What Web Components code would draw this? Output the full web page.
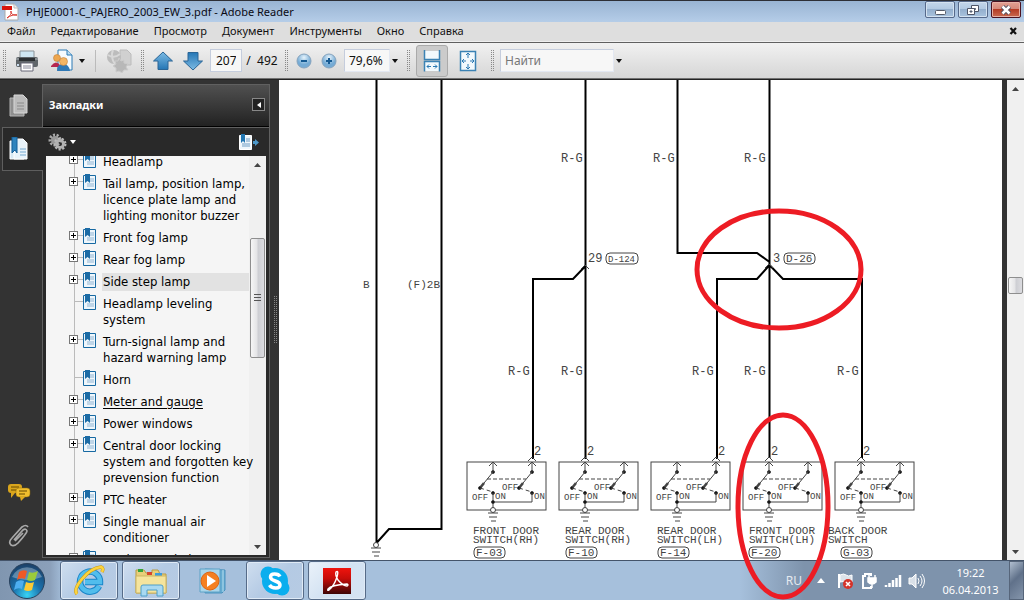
<!DOCTYPE html>
<html lang="ru">
<head>
<meta charset="utf-8">
<title>PHJE0001-C_PAJERO_2003_EW_3.pdf - Adobe Reader</title>
<style>
html,body{margin:0;height:100%;overflow:hidden}
body{font:12px/16px "Noto Sans","Open Sans",sans-serif;color:#111;background:#333}
</style>
</head>
<body>
<reader-app></reader-app>
<script>
const BASE = `*{box-sizing:border-box}
button{font:inherit;color:inherit;margin:0;padding:0;border:0;background:none;display:flex;align-items:center;justify-content:center}
input{font:inherit;color:inherit;margin:0;min-width:0;outline:0}
svg{display:block;flex:none}`;
function define(name, css, html) {
  customElements.define(name, class extends HTMLElement {
    constructor() {
      super();
      this.attachShadow({mode: 'open'}).innerHTML =
        `<style>${BASE}${css}</style>${typeof html === 'function' ? html(this) : html}`;
    }
  });
}

/* ---------- window frame ---------- */
define('title-bar', `
:host{display:flex;align-items:center;height:22px;padding-left:2px;border-top:1px solid #2d2f36;background:linear-gradient(#99b4d3,#b5cde8)}
h1{flex:1;margin:0 0 0 7px;font-size:11px;line-height:16px;font-weight:normal;color:#0a0a14;white-space:nowrap}
.b{display:flex;gap:3px;margin-right:3px;align-self:flex-start}
button{width:30px;height:17px;border:1px solid #56698a;border-radius:2px;background:linear-gradient(#c3d6ea,#b3cae2 45%,#94afcd 50%,#a9c3de);box-shadow:inset 0 0 0 1px #d4e2f0}
button.x{border-color:#4a1220;background:linear-gradient(#e3a193,#d5897a 45%,#b53c25 50%,#c96a50);box-shadow:inset 0 0 0 1px #e6b1a6}
`, `
<svg width="17" height="18" viewBox="0 0 17 18"><path d="M3 1h9l4 4v12H3z" fill="#fff" stroke="#aaa"/><path d="M12 1v4h4" fill="#eee" stroke="#bbb"/><path d="M0 3h10v4H0z" fill="#d8150c"/><path d="M5 15c3-2 5-5 4-7-1 1 1 5 6 4-3-1-7 1-10 3z" fill="none" stroke="#d8352c"/></svg>
<h1>PHJE0001-C_PAJERO_2003_EW_3.pdf - Adobe Reader</h1>
<div class="b">
<button aria-label="Свернуть"><svg width="14" height="12"><rect x="2.5" y="6.5" width="10" height="4" rx="1" fill="#fff" stroke="#555b68"/></svg></button>
<button aria-label="Восстановить"><svg width="14" height="12"><path d="M5.500 1.500h7v6h-7z" fill="#fff" stroke="#4f5668"/><path d="M8.500 4.500h1v1h-1zM1.500 4.500h7v6h-7z" fill="#fff" stroke="#4f5668"/><path d="M4 7h2v1H4z" fill="#98b1ce" stroke="#4f5668"/></svg></button>
<button class="x" aria-label="Закрыть"><svg width="14" height="12"><path d="M3.500 2.500l7 7M10.500 2.500l-7 7" stroke="#4b5060" stroke-width="4.500"/><path d="M3.500 2.500l7 7M10.500 2.500l-7 7" stroke="#fff" stroke-width="2.500"/></svg></button>
</div>`);

define('menu-bar', `
:host{display:flex;align-items:center;height:20px;padding:0 6px 2px 7px;background:#dedede;border-bottom:1px solid #efefef}
nav{display:flex;flex:1;gap:15px;font-size:11px}
nav button{white-space:nowrap}
`, `<nav>${['Файл','Редактирование','Просмотр','Документ','Инструменты','Окно','Справка'].map(t=>`<button>${t}</button>`).join('')}</nav>
<button aria-label="Закрыть документ"><svg width="9" height="8"><path d="M1.500 1l5.500 6M7 1L1.500 7" stroke="#111" stroke-width="2.200"/></svg></button>`);

const caret = (c = '#111') => `<svg width="6" height="4"><path d="M0 0h6L3 4z" fill="${c}"/></svg>`;
define('tool-grip', `:host{display:block;flex:none;width:8px;height:22px;padding:0 2px}
i{display:block;height:22px;background:conic-gradient(#888 25%,transparent 0) 0 0/2px 2px}`, `<i></i>`);
define('combo-box', `:host{display:flex;align-items:center;flex:none}
input{height:23px;border:1px solid #c5cddd;border-bottom-color:#e3e8f2;border-right-color:#e3e8f2;background:#f7f7f7;padding:0 4px}
input::placeholder{color:#777;opacity:1}
button{width:10px;height:22px}`,
el => `<input aria-label="${el.getAttribute('label')}" style="width:${el.getAttribute('size')}px" value="${el.getAttribute('value')||''}" placeholder="${el.getAttribute('hint')||''}"><button aria-label="Список">${caret()}</button>`);

const arrow = `<svg width="22" height="22" viewBox="0 0 22 22"><defs><linearGradient id="a" x2="0" y2="1"><stop stop-color="#7dbbe4"/><stop offset="1" stop-color="#2476b5"/></linearGradient></defs><path d="M11 2l9.500 9H16v8.500H6V11H1.500z" fill="url(#a)" stroke="#2a6596"/></svg>`;
const round = p => `<svg width="18" height="18"><defs><radialGradient id="r" cy=".25"><stop stop-color="#e6f3fb"/><stop offset="1" stop-color="#75abd5"/></radialGradient></defs><circle cx="9" cy="9" r="7" fill="url(#r)" stroke="#86a3bd"/><path d="${p}" stroke="#155a93" stroke-width="2"/></svg>`;
define('tool-bar', `
:host{display:flex;align-items:center;gap:4px;height:37px;border-top:1px solid #606060;border-bottom:1px solid #707070;background:linear-gradient(#f1f1f1,#d6d6d6);overflow:hidden}
button{height:30px;width:30px;flex:none}
.w{width:42px;gap:5px}.n{width:26px}.r{width:20px}.p{width:22px}
.on{height:32px;border:1px solid #aaa;border-radius:3px;background:#cbcbcb}
.m{width:32px}
.down svg{transform:rotate(180deg)}
hr{width:1px;height:22px;margin:0 4px 0 3px;border:0;background:#bbb}
.page{width:32px;height:23px;border:1px solid #c5cddd;background:#f7f7f7;padding:0 5px}
output{width:32px;text-align:center;white-space:pre}
`, `
<tool-grip></tool-grip>
<button aria-label="Печать"><svg width="24" height="24" viewBox="0 0 24 24"><path d="M5 2h14v7H5z" fill="#cfe6f2" stroke="#8c9499"/><rect x="1" y="8" width="22" height="10" rx="2" fill="#60666a"/><path d="M1 9h22v2H1z" fill="#8b9195"/><path d="M4 9h16v3H4z" fill="#2c3033"/><path d="M6 14h12v8H6z" fill="#fff" stroke="#667"/><path d="M8 17h8M8 19h8" stroke="#889"/><path d="M2 15h2v2H2z" fill="#cde"/></svg></button>
<button class="w" aria-label="Совместная работа"><svg width="24" height="24" viewBox="0 0 24 24"><path d="M8 1h9l5 5v15H8z" fill="#f5fbff" stroke="#2d7ab5"/><path d="M17 1v5h5" fill="#bcdcf0" stroke="#2d7ab5"/><path d="M1 17q5-7 10 0v1H1z" fill="#b5274f"/><circle cx="7" cy="9" r="3.500" fill="#eda64f" stroke="#b9752e" stroke-width=".5"/><path d="M7 22q0-7 6-7t7 7z" fill="#2f78b5"/><circle cx="13.500" cy="12.500" r="4" fill="#f3b564" stroke="#b9752e" stroke-width=".5"/></svg>${caret()}</button>
<hr>
<button aria-label="Acrobat.com" disabled><svg width="26" height="24" viewBox="0 0 26 24"><path d="M14 1h7l4 4v11H14z" fill="#d0d0d0" stroke="#bcbcbc"/><circle cx="8" cy="8" r="7" fill="#bcbcbc"/><path d="M2 6q6 4 12-1M7 1q-3 7 2 14" stroke="#d8d8d8" fill="none" stroke-width="2"/><path d="M13 9l2 3 3-1v3l4 1-2 3 2 3-4 0-2 3-3-2-3 1v-4l-3-2 3-2-1-3 3 0z" fill="#b8b8b8" stroke="#ccc"/></svg></button>
<tool-grip></tool-grip>
<button class="n" aria-label="Предыдущая страница">${arrow}</button>
<button class="n down" aria-label="Следующая страница">${arrow}</button>
<input class="page" aria-label="Страница" value="207"><output>/  492</output>
<tool-grip></tool-grip>
<button class="r" aria-label="Уменьшить">${round('M6 9h6')}</button>
<button class="p" aria-label="Увеличить">${round('M6 9h6M9 6v6')}</button>
<combo-box label="Масштаб" size="46" value="79,6%"></combo-box>
<tool-grip></tool-grip>
<button class="m on" aria-label="По ширине"><svg width="18" height="22" viewBox="0 0 18 22"><path d="M1.500 1h15v8h-15zM1.500 12h15v9h-15z" fill="#f2f9fd"/><path d="M1.500 0v9.500h15V0M1.500 21.500v-10h15v10" fill="none" stroke="#3b82b4" stroke-width="1.500"/><path d="M4 16.500h4M10 16.500h4M6 14.500l-2 2 2 2M12 14.500l2 2-2 2" fill="none" stroke="#2a79b3"/></svg></button>
<button class="m" aria-label="Страница целиком"><svg width="18" height="22" viewBox="0 0 18 22"><path d="M1.500 1.500h15v19h-15z" fill="#f2f9fd" stroke="#3b82b4" stroke-width="1.500"/><path d="M9 3v5M9 14v5M3 11h4M11 11h4M7 5l2-2 2 2M7 17l2 2 2-2M5 9l-2 2 2 2M13 9l2 2-2 2" fill="none" stroke="#2a79b3"/></svg></button>
<tool-grip></tool-grip>
<combo-box label="Поиск" size="114" hint="Найти"></combo-box>`);

/* ---------- navigation pane ---------- */
define('side-rail', `
:host{display:flex;flex-direction:column;align-items:stretch;width:42px;flex:none;background:#333;padding:4px 0 3px}
button{height:43px;padding-right:5px}
.on{height:44px;margin:0 -1px 0 2px;padding-right:8px;border:1px solid #5e5e5e;border-right:0;background:#292929;position:relative;z-index:1}
i{flex:1}
`, `
<button aria-label="Страницы"><svg width="20" height="24" viewBox="0 0 20 24"><path d="M1 4h10l4 4v14H1z" fill="#8f8f8f" stroke="#b5b5b5"/><path d="M5 1h9l4 4v14H5z" fill="#bcbcbc" stroke="#d8d8d8"/><path d="M8 9h7M8 12h7M8 15h7" stroke="#8a8a8a"/></svg></button>
<button class="on" aria-label="Закладки"><svg width="20" height="24" viewBox="0 0 20 24"><path d="M1 4h14v18H1z" fill="#d8e9f4" stroke="#fff"/><path d="M5 2h9l4 4v16H5z" fill="#e8f3fa" stroke="#fff"/><path d="M11 12h6M11 15h6M11 18h6" stroke="#75a9d0"/><path d="M3 0h5v16l-2-3-3 3z" fill="#2e83bd" stroke="#155f98"/></svg></button>
<i></i>
<button aria-label="Комментарии"><svg width="24" height="20" viewBox="0 0 24 20"><rect x="1" y="1" width="14" height="9" rx="3" fill="#d9a51c"/><path d="M4 9v6l4-5" fill="#d9a51c"/><path d="M4 4h8M4 7h5" stroke="#654900"/><rect x="9" y="5" width="14" height="9" rx="3" fill="#f0be2e" stroke="#8d6808" stroke-width=".5"/><path d="M13 14l1 4 4-4" fill="#e0ab20"/><path d="M12 8h8M12 11h6" stroke="#654900"/></svg></button>
<button aria-label="Вложения"><svg width="22" height="24" viewBox="0 0 22 24"><path d="M6 16L15 6q3-2 4 1 0 2-9 12-4 4-7 2-3-3 1-7L14 3q4-3 6 0M7 17l8-8" fill="none" stroke="#a9a9a9" stroke-width="1.700"/></svg></button>`);

const mark = `<svg class="mk" width="13" height="16" viewBox="0 0 13 16"><path d="M.5 1.500h12v14H.5z" fill="#eef6fb" stroke="#1769a2"/><path d="M7 5h4M7 7h4M4 10h7M4 12h7" stroke="#8fb4d3"/><path d="M2 0h5v9L4.500 7 2 9z" fill="#1b6ba5"/></svg>`;
define('book-mark', `
:host{display:grid;grid-template-columns:9px 5px 19px 1fr;align-items:start;padding-left:23px;
  background:linear-gradient(#bbb,#bbb) 28px 0/1px 100% no-repeat}
.t{width:9px;height:9px;margin-top:4px;border:1px solid #777;background:#fff}
.l{height:1px;background:#bbb;margin-top:8px}
.far{grid-column:1/3;margin-left:5px}
.mk{margin-top:1px}
a{color:#000;text-decoration:none;padding:3px 1px;white-space:nowrap}
:host([current]) a{text-decoration:underline;text-underline-offset:2px}
:host([selected]) a{background:linear-gradient(#e2e2e2,#e2e2e2) 0 2px/100% 18px no-repeat}
`, el => `${el.hasAttribute('leaf') ? '<span class="l far"></span>' : '<button class="t" aria-label="Развернуть"><svg width="7" height="7"><path d="M1 3.500h5M3.500 1v5" stroke="#000"/></svg></button><span class="l"></span>'}${mark}<a href="#"><slot></slot></a>`);

define('scroll-bar', `
:host{display:flex;flex-direction:column;flex:none;width:17px;background:#f0f0f0}
button{height:17px;flex:none}
.track{flex:1;display:grid;grid-template-rows:var(--before) var(--size) 1fr}
.thumb{grid-row:2;margin:0 1px;border:1px solid #8e8e8e;border-radius:2px;background:linear-gradient(90deg,#f6f6f6,#e4e4e6 45%,#cdced3 55%,#dcdce0);display:flex;align-items:center;justify-content:center}
`, el => `<button aria-label="Вверх"><svg width="7" height="4"><path d="M0 4h7L3.500 0z" fill="#444"/></svg></button><div class="track"><div class="thumb">${el.hasAttribute('plain')?'':'<svg width="7" height="8"><path d="M0 .5h7M0 3.500h7M0 6.500h7" stroke="#555"/></svg>'}</div></div><button aria-label="Вниз"><svg width="7" height="4"><path d="M0 0h7L3.500 4z" fill="#444"/></svg></button>`);

define('bookmark-panel', `
:host{display:flex;flex-direction:column;flex:none;width:228px;margin:4px 0 2px;border:1px solid #606060;background:#292929;min-height:0}
header{height:42px;flex:none;display:flex;align-items:center;justify-content:space-between;padding:0 4px 2px 6px;background:linear-gradient(#505050,#222);border-bottom:1px solid #000;color:#fff}
h2{margin:0;font-size:11px;line-height:16px;font-weight:bold}
header button{width:13px;height:13px;border:1px solid #888;background:#222}
.tools{height:29px;flex:none;display:flex;align-items:center;justify-content:space-between;padding:0 10px 0 5px;border-top:1px solid #606060}
.tools button{gap:3px;height:24px}
.body{flex:1;display:flex;min-height:0;margin:0 3px 2px 3px;background:#f5f5f5}
.list{flex:1;min-width:0;overflow-x:visible;overflow-y:clip;position:relative;z-index:1;font:13px/16px "DejaVu Sans Condensed","DejaVu Sans",sans-serif}
.scrolled{margin-top:-5px}
scroll-bar{--before:65px;--size:120px}
`, `
<header><h2>Закладки</h2><button aria-label="Свернуть панель"><svg width="4" height="6"><path d="M4 0v6L0 3z" fill="#fff"/></svg></button></header>
<div class="tools"><button aria-label="Параметры"><svg width="19" height="18" viewBox="0 0 19 18"><circle cx="7" cy="7" r="5" fill="none" stroke="#aaa" stroke-width="3" stroke-dasharray="2 1.500"/><circle cx="7" cy="7" r="4" fill="#999"/><circle cx="12" cy="11" r="5" fill="none" stroke="#bbb" stroke-width="3" stroke-dasharray="2 1.500"/><circle cx="12" cy="11" r="3.500" fill="none" stroke="#b2b2b2" stroke-width="3"/></svg>${caret('#fff')}</button>
<button aria-label="Развернуть текущую закладку"><svg width="20" height="17" viewBox="0 0 20 17"><path d="M.5 1.500h12v14H.5z" fill="#eef6fb" stroke="#fff"/><path d="M7 5h4M7 7h4M3 10h8M3 12h8" stroke="#6e9dc4"/><path d="M2 0h4v9L4 7 2 9z" fill="#2277b2"/><path d="M14 7h2V5l4 3.500-4 3.500v-2h-2z" fill="#4c97c8"/></svg></button></div>
<div class="body"><div class="list"><div class="scrolled">
<book-mark>Headlamp</book-mark>
<book-mark>Tail lamp, position lamp,<br>licence plate lamp and<br>lighting monitor buzzer</book-mark>
<book-mark>Front fog lamp</book-mark>
<book-mark>Rear fog lamp</book-mark>
<book-mark selected>Side step lamp</book-mark>
<book-mark leaf>Headlamp leveling<br>system</book-mark>
<book-mark>Turn-signal lamp and<br>hazard warning lamp</book-mark>
<book-mark leaf>Horn</book-mark>
<book-mark current>Meter and gauge</book-mark>
<book-mark>Power windows</book-mark>
<book-mark>Central door locking<br>system and forgotten key<br>prevension function</book-mark>
<book-mark>PTC heater</book-mark>
<book-mark>Single manual air<br>conditioner</book-mark>
<book-mark>Dual manual air</book-mark>
</div></div><scroll-bar></scroll-bar></div>`);

/* ---------- wiring diagram ---------- */
const T = (x, y, s, size = 12) => `<text x="${x}" y="${y}" font-size="${size}">${s}</text>`;
const tag = (x, y, w, s, size) => `<rect x="${x}" y="${y - 9}" width="${w}" height="11" rx="4"/>` + T(x + 2, y, s, size);
const up = (x, y) => `<path d="M${x - 4} ${y + 4}L${x} ${y}L${x + 4} ${y + 4}"/>`;
const dot = (x, y) => `<circle cx="${x}" cy="${y}" r="1.500" fill="#000"/>`;
const ground = (x, y) => `<circle cx="${x}" cy="${y}" r="2.500" fill="#fff"/><path d="M${x-5} ${y+3}h10M${x-4} ${y+7}h8M${x-2} ${y+11}h5"/>`;
function doorSwitch(x, feed, cx, l1, l2, tx, code) {
  const a = x + 26, b = x + 65, f = feed ? b : a;
  const pole = p => `${up(p, 462)}${dot(p, 472)}<path d="M${p} 462v10l-13 16"/><path d="M${p-13} 488l4-5" stroke-width="2.500"/>${dot(p-13, 488)}<path d="M${p-13} 488L${p} 492" stroke-dasharray="4 3"/>${dot(p, 493)}`;
  return `<rect x="${x}" y="462" width="79" height="48"/>${pole(a)}${pole(b)}${up(f, 457)}
<path d="M${a-6} 479H${b-6}" stroke-dasharray="4 2"/><path d="M${a} 493v15M${a} 502H${b}V493"/>${dot(a, 502)}${ground(a, 510)}
${T(x+5,500,'OFF',9)}${T(x+35,490,'OFF',9)}${T(a+2,499,'ON',9)}${T(b+2,499,'ON',9)}${T(f+2,455,'2')}
${T(cx,534,l1,11)}${T(cx,543,l2,11)}${tag(tx,556,31,code,11)}`;
}
define('wiring-page', `
:host{display:block;position:relative;z-index:2;flex:1;min-width:0;background:#fff}
svg{width:100%;height:100%}
.pen{position:absolute;inset:0;overflow:visible;pointer-events:none}
text{font-family:"Liberation Mono",monospace;fill:#444;stroke:none}
`, `
<svg viewBox="279 80 723 480" fill="none" stroke="#444" stroke-width="1">
<g stroke="#000" stroke-width="2"><path d="M376.500 80V543M441.500 80V529H389L376.500 543M585.500 80V459M585.500 266L573 279H533V459M677.500 80V253H757L769.500 262M769.500 80V458M769.500 265L757 279H717V459M769.500 265L783 279H862V458"/></g>
${up(585,265)}${up(769,264)}${ground(376,545)}
${T(561,162,'R-G')}${T(653,162,'R-G')}${T(744,162,'R-G')}
${T(363,288,'B',11)}${T(407,288,'(F)2B',11)}
${T(588,262,'29')}${tag(606,262,32,'D-124',9)}${T(773,262,'3')}${tag(784,262,31,'D-26',11)}
${[508,561,692,744,837].map(x=>T(x,375,'R-G')).join('')}
${doorSwitch(467,1,473,'FRONT DOOR','SWITCH(RH)',474,'F-03')}
${doorSwitch(559,0,565,'REAR DOOR','SWITCH(RH)',566,'F-10')}
${doorSwitch(651,1,657,'REAR DOOR','SWITCH(LH)',658,'F-14')}
${doorSwitch(743,0,749,'FRONT DOOR','SWITCH(LH)',749,'F-20')}
${doorSwitch(835,0,828,'BACK DOOR','SWITCH',841,'G-03')}
</svg>
<svg class="pen" viewBox="279 80 723 480" fill="none" stroke="#ed1c24" stroke-width="5"><ellipse cx="779" cy="269.500" rx="82" ry="58.500"/><ellipse cx="783" cy="506" rx="45" ry="91"/></svg>`);

/* ---------- taskbar ---------- */
define('task-bar', `
:host{display:flex;height:40px;flex:none;border-top:1px solid #44546a;color:#fff;
 background:linear-gradient(90deg,#8096b0,#8ba0ba 50px,#a6c0dc 64px,#a6c0dc calc(100% - 284px),#7e93ac calc(100% - 220px),#7e93ac)}
.start{width:54px}
.apps{display:flex;gap:4px;flex:1;margin-left:6px}
.apps button{width:58px;height:39px;border:1px solid transparent}
.apps .run{border-color:#566b88;border-radius:3px;box-shadow:inset 0 0 0 1px #dfeaf6;background:linear-gradient(135deg,#cfdeef,#b4cae4 50%,#b7cbe3)}
.apps .act{background:linear-gradient(135deg,#eaf2fa,#d3e2f2 50%,#d5e3f2)}
.tray{display:flex;align-items:center;gap:6px}
.tray button{width:18px;height:30px}
.lang{color:#e4e9ef;margin-right:4px}
time{width:77px;text-align:center;font-size:11px;line-height:17px}
.desk{width:15px;height:39px;border:1px solid #56657a;background:linear-gradient(135deg,#b1bfd0,#60718a 45%,#8495ab)}
`, `
<button class="start" aria-label="Пуск"><svg width="38" height="38" viewBox="0 0 38 38"><defs><radialGradient id="o" cy=".9" r=".9"><stop stop-color="#38d3f5"/><stop offset=".45" stop-color="#1a70ab"/><stop offset="1" stop-color="#1c3f66"/></radialGradient></defs><circle cx="19" cy="19" r="17.500" fill="url(#o)" stroke="#28415c"/><path d="M4 15a16 15 0 0 1 30 0q-15 6-30 0z" fill="#fff" opacity=".3"/><path d="M11 10q4-3 8-1l-2 8q-4-2-8 1z" fill="#ee5a26"/><path d="M21 10q4 2 9-1l-3 9q-4 2-8 0z" fill="#9bcb3b"/><path d="M8 20q4-3 8-1l-2 8q-4-2-8 1z" fill="#4daef0"/><path d="M18 20q4 2 8 0l-2 8q-4 2-8 0z" fill="#fcca35"/></svg></button>
<div class="apps">
<button class="run" aria-label="Internet Explorer"><svg width="34" height="34" viewBox="0 0 34 34"><path d="M27 22a10 10 0 1 1 1-4H13" fill="none" stroke="#1b86c9" stroke-width="6.500"/><path d="M27 22a10 10 0 1 1 1-4H13" fill="none" stroke="#51bdec" stroke-width="4.500"/><path d="M5 30Q1 26 10 15T29 3q3 1 1 5" fill="none" stroke="#c99a15" stroke-width="3.500"/><path d="M5 30Q1 26 10 15T29 3q3 1 1 5" fill="none" stroke="#fbd33e" stroke-width="2.500"/></svg></button>
<button class="run" aria-label="Проводник"><svg width="34" height="34" viewBox="0 0 34 34"><path d="M2 6h8l2 3h6v-3h6l2 4h6v19H2z" fill="#e8cf7a" stroke="#b99b43"/><path d="M4 5h5v3H4z" fill="#34a43a"/><path d="M13 8h5v3h-5z" fill="#d7452d"/><path d="M21 9h7v3h-7z" fill="#3b9bdd"/><path d="M2 12h30v17H2z" fill="#f5e49d" stroke="#cdb562"/><path d="M7 32V23q0-2 2-2h18q2 0 2 2v9h-6v-6H13v6z" fill="#a9d9f1" stroke="#4f9fc8"/></svg></button>
<button aria-label="Проигрыватель"><svg width="34" height="30" viewBox="0 0 34 30"><path d="M9 3l20 1v20l-3 3H9z" fill="#65abd1" stroke="#4a91bd"/><path d="M4 3h20v23H4z" fill="#a9d5ea" stroke="#5da2c7"/><path d="M27 4v22" stroke="#b6deef"/><circle cx="14" cy="15" r="9" fill="#f57f20" stroke="#de6411"/><path d="M11 9v12l9-6z" fill="#fff"/></svg></button>
<button class="run" aria-label="Skype"><svg width="32" height="32" viewBox="0 0 32 32"><circle cx="16" cy="16" r="13" fill="#0aaeee"/><circle cx="9" cy="9" r="7.500" fill="#0aaeee"/><circle cx="23" cy="23" r="7.500" fill="#0aaeee"/><path d="M21 11.500C19 8 11.500 8 11.500 12c0 5 9.500 3 9.500 8 0 4-8 4-10.500 0" fill="none" stroke="#fff" stroke-width="3.500"/></svg></button>
<button class="run act" aria-label="Adobe Reader"><svg width="28" height="28" viewBox="0 0 28 28"><defs><linearGradient id="d" x2="0" y2="1"><stop stop-color="#f0140d"/><stop offset=".4" stop-color="#c70d09"/><stop offset="1" stop-color="#3d0505"/></linearGradient></defs><path d="M0 1h28v26H0z" fill="url(#d)"/><path d="M13 5q3-2 1 5-3 9-8 13-2 1-1-1 3-4 19-5 2 1 0 2-4 0-9-6-3-5-2-8z" fill="none" stroke="#fff" stroke-width="1.400"/></svg></button>
</div>
<div class="tray"><span class="lang">RU</span>
<button aria-label="Скрытые значки"><svg width="8" height="5"><path d="M0 5h8L4 0z" fill="#fff"/></svg></button>
<button aria-label="Центр поддержки"><svg width="18" height="18" viewBox="0 0 18 18"><path d="M3 2v14" stroke="#fff" stroke-width="2"/><path d="M4 3q4-2 6 0t6 0v7q-4 1-6 0t-6 0z" fill="#dce3ea" stroke="#fff"/><circle cx="12" cy="12" r="5" fill="#d5332a"/><path d="M10 10l4 4M14 10l-4 4" stroke="#fff" stroke-width="1.600"/></svg></button>
<button aria-label="Питание"><svg width="18" height="18" viewBox="0 0 18 18"><path d="M11 4V2H5v2H3v12h8v-2" fill="none" stroke="#fff" stroke-width="2"/><path d="M8 6h8v4q-4 4-8 0zM9 3v3M15 3v3M12 12v4" stroke="#fff" fill="#fff" stroke-width="1.500"/></svg></button>
<button aria-label="Сеть"><svg width="18" height="14" viewBox="0 0 18 14"><path d="M2 11v2M5.500 9v4M9 6v7M12.500 4v9M16 1v12" stroke="#fff" stroke-width="2.500"/></svg></button>
<button aria-label="Громкость"><svg width="18" height="16" viewBox="0 0 18 16"><path d="M1 5h3l4-4v14l-4-4H1z" fill="#d9e0e8" stroke="#fff"/><path d="M10 5q2 3 0 6M12 3q4 5 0 10M14 1q5 7 0 14" fill="none" stroke="#fff"/></svg></button>
<time>19:22<br>06.04.2013</time></div><button class="desk" aria-label="Свернуть все окна"></button>`);

define('reader-app', `
:host{display:flex;flex-direction:column;height:100vh}
main{flex:1;display:flex;min-height:0;background:#333;border-top:1px solid #222}
.split{width:9px;flex:none;display:flex;align-items:center;justify-content:center}
.split i{width:4px;height:48px;background:conic-gradient(#888 25%,transparent 0) 0 0/2px 2px}
.gap{width:5px;flex:none}
main>scroll-bar{--before:180px;--size:17px}
`, `<title-bar></title-bar><menu-bar></menu-bar><tool-bar></tool-bar>
<main><side-rail></side-rail><bookmark-panel></bookmark-panel><div class="split"><i></i></div><wiring-page></wiring-page><div class="gap"></div><scroll-bar plain></scroll-bar></main>
<task-bar></task-bar>`);
</script>
</body>
</html>
